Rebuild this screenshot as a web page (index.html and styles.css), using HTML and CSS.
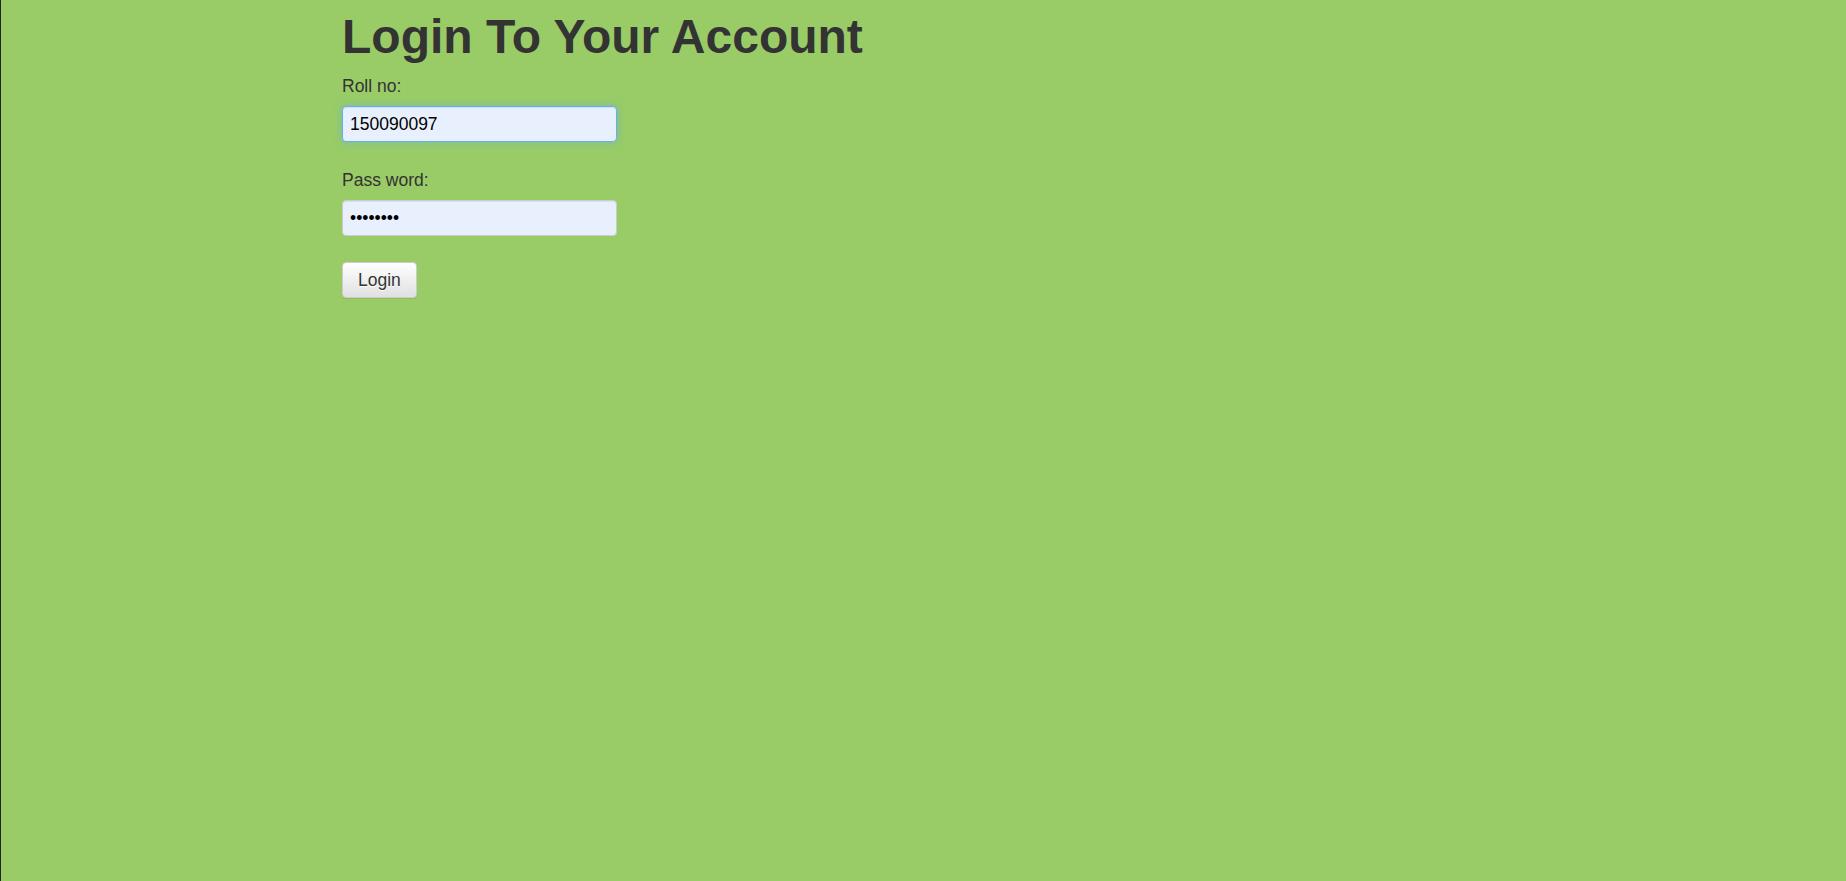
FILE: index.html
```html
<!DOCTYPE html>
<html lang="en">
<head>
<meta charset="utf-8">
<title>Login</title>
<link rel="stylesheet" href="styles.css">
</head>
<body>
<main class="page">
  <h1 class="title">Login To Your Account</h1>
  <form class="login-form">
    <div class="form-group">
      <label class="field-label" for="roll">Roll no:</label>
      <input class="field-input is-focused" id="roll" type="text" value="150090097">
    </div>
    <div class="form-group">
      <label class="field-label" for="pass">Pass word:</label>
      <input class="field-input" id="pass" type="password" value="12345678">
    </div>
    <button class="btn-login" type="button">Login</button>
  </form>
</main>
</body>
</html>
```
FILE: styles.css
```css
html, body {
  margin: 0;
  height: 100%;
}
body {
  background: #99cc66;
  border-left: 1px solid #222;
  box-sizing: border-box;
  font-family: "Liberation Sans", Arial, sans-serif;
  color: #333;
}
.page {
  padding: 11px 0 0 341px;
}
.title {
  margin: 0;
  font-size: 48px;
  line-height: 52px;
  font-weight: bold;
  color: #333;
}
.login-form {
  margin-top: 11px;
  display: flex;
  flex-direction: column;
  align-items: flex-start;
}
.form-group {
  display: flex;
  flex-direction: column;
  align-items: flex-start;
  margin-bottom: 26px;
}
.field-label {
  font-size: 17.5px;
  line-height: 25px;
  margin-bottom: 7px;
  color: #333;
}
.field-input {
  box-sizing: border-box;
  width: 275px;
  height: 36px;
  padding: 0 7px;
  font-family: "Liberation Sans", Arial, sans-serif;
  font-size: 17.5px;
  color: #000;
  background: #e8f0fe;
  border: 1px solid #ccc;
  border-radius: 4px;
  box-shadow: inset 0 1px 1px rgba(0,0,0,.075);
  outline: none;
}
.field-input.is-focused {
  border-color: #66afe9;
  box-shadow: inset 0 1px 1px rgba(0,0,0,.075), 0 0 8px rgba(102,175,233,.6);
}
.btn-login {
  box-sizing: border-box;
  height: 36px;
  padding: 0 15px;
  font-family: "Liberation Sans", Arial, sans-serif;
  font-size: 17.5px;
  color: #333;
  background: linear-gradient(to bottom, #fff 0, #e0e0e0 100%);
  border: 1px solid #ccc;
  border-radius: 4px;
  text-shadow: 0 1px 0 #fff;
  box-shadow: inset 0 1px 0 rgba(255,255,255,.15), 0 1px 1px rgba(0,0,0,.075);
  cursor: pointer;
}
```
